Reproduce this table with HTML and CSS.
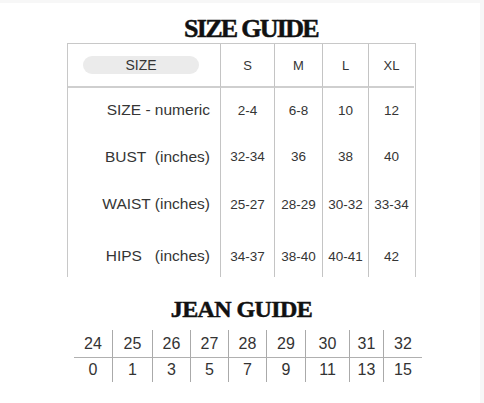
FILE: index.html
```html
<!DOCTYPE html>
<html>
<head>
<meta charset="utf-8">
<link rel="stylesheet" href="styles.css">
</head>
<body>
<div class="page">
  <h1 class="title size-title">SIZE GUIDE</h1>
  <div class="size-table">
    <div class="cell head first"><span class="pill">SIZE</span></div>
    <div class="cell head">S</div>
    <div class="cell head">M</div>
    <div class="cell head">L</div>
    <div class="cell head">XL</div>

    <div class="cell label">SIZE - numeric</div>
    <div class="cell val">2-4</div>
    <div class="cell val">6-8</div>
    <div class="cell val">10</div>
    <div class="cell val">12</div>

    <div class="cell label">BUST&nbsp;&nbsp;(inches)</div>
    <div class="cell val">32-34</div>
    <div class="cell val">36</div>
    <div class="cell val">38</div>
    <div class="cell val">40</div>

    <div class="cell label">WAIST (inches)</div>
    <div class="cell val">25-27</div>
    <div class="cell val">28-29</div>
    <div class="cell val">30-32</div>
    <div class="cell val">33-34</div>

    <div class="cell label last">HIPS&nbsp;&nbsp;&nbsp;(inches)</div>
    <div class="cell val last">34-37</div>
    <div class="cell val last">38-40</div>
    <div class="cell val last">40-41</div>
    <div class="cell val last">42</div>
  </div>

  <h2 class="title jean-title">JEAN GUIDE</h2>
  <div class="jean-table">
    <div class="j top">24</div><div class="j top">25</div><div class="j top">26</div><div class="j top">27</div><div class="j top">28</div><div class="j top">29</div><div class="j top">30</div><div class="j top">31</div><div class="j top">32</div>
    <div class="j">0</div><div class="j">1</div><div class="j">3</div><div class="j">5</div><div class="j">7</div><div class="j">9</div><div class="j">11</div><div class="j">13</div><div class="j">15</div>
  </div>
</div>
</body>
</html>
```

FILE: styles.css
```css
html, body {
  margin: 0;
  padding: 0;
}
body {
  background: #f7f7f7;
  width: 484px;
  height: 403px;
  overflow: hidden;
}
.page {
  background: #ffffff;
  margin: 3px 4px 0 0;
  height: 400px;
  padding-top: 13px;
  box-sizing: border-box;
  font-family: "Liberation Sans", Arial, sans-serif;
  color: #353535;
}
.title {
  font-family: "Liberation Serif", "Times New Roman", serif;
  font-weight: bold;
  color: #111;
  text-align: center;
  margin: 0;
  -webkit-text-stroke: 0.5px #111;
}
.size-title {
  font-size: 26px;
  line-height: 26px;
  letter-spacing: -1.7px;
  margin-left: 22px;
  margin-bottom: 1px;
}
.size-table {
  margin-left: 67px;
  width: 349px;
  box-sizing: border-box;
  border: 1.5px solid #c8c8c8;
  border-bottom: none;
  display: grid;
  grid-template-columns: 152px 54px 48px 46px 46px;
  grid-template-rows: 44px 44px 49px 46px 50px;
}
.cell {
  display: flex;
  align-items: center;
  justify-content: center;
  border-left: 1.5px solid #c4c4c4;
  font-size: 13.5px;
}
.head {
  border-bottom: 2px solid #cfcfcf;
  font-size: 13px;
}
.head.first {
  border-left: none;
  justify-content: flex-start;
  padding-left: 15px;
}
.pill {
  display: flex;
  align-items: center;
  justify-content: center;
  width: 116px;
  height: 18px;
  border-radius: 9px;
  background: #ebebeb;
  font-size: 14px;
}
.label {
  border-left: none;
  justify-content: flex-end;
  padding-right: 10px;
  font-size: 15.5px;
  white-space: nowrap;
}
.last {
  padding-top: 8px;
}
.jean-title {
  font-size: 24px;
  line-height: 24px;
  letter-spacing: -0.6px;
  margin-top: 20px;
  margin-left: 3px;
}
.jean-table {
  margin-top: 9px;
  margin-left: 74px;
  width: 348px;
  display: grid;
  grid-template-columns: 38px 40px 38px 38px 38px 39px 44px 34px 39px;
  grid-template-rows: 28px 24px;
  font-size: 16px;
  color: #333;
}
.j {
  display: flex;
  align-items: center;
  justify-content: center;
  border-left: 1px solid #aaa;
}
.j:nth-child(9n+1) {
  border-left: none;
}
.j.top {
  border-bottom: 1.5px solid #b0b0b0;
}
```
